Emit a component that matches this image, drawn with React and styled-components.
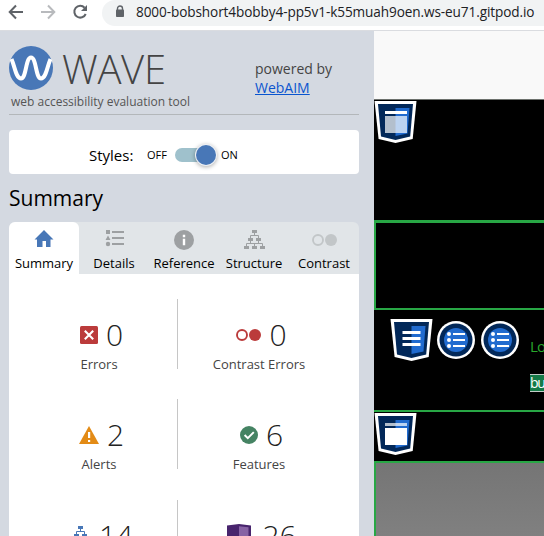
import React from "react";
import styled, { createGlobalStyle } from "styled-components";

const GlobalStyle = createGlobalStyle`
  *, *::before, *::after { box-sizing: border-box; }
  body { margin: 0; background: #fff; overflow: hidden; font-family: "Open Sans", "Noto Sans", sans-serif; }
  svg { display: block; flex: none; }
`;

const Window = styled.div`
  width: 544px;
  height: 536px;
  overflow: hidden;
  display: flex;
  flex-direction: column;
`;

const BrowserBar = styled.header`
  flex: none;
  height: 31px;
  display: flex;
  align-items: flex-start;
  background: #fff;
  border-bottom: 1px solid #dadce0;
`;

const NavButtons = styled.nav`
  width: 102px;
  height: 26px;
  flex: none;
`;

const AddressBar = styled.div`
  flex: 1;
  height: 26px;
  display: flex;
  background: #f1f3f4;
  border-radius: 14px 0 0 14px;
`;

const LockSlot = styled.span`
  width: 34px;
  flex: none;
  padding: 5px 0 0 13px;
`;

const Text = styled.span`
  display: block;
  white-space: nowrap;
  font-size: ${(p) => p.$size}px;
  line-height: ${(p) => p.$line}px;
  font-weight: ${(p) => p.$weight || 400};
  letter-spacing: ${(p) => p.$track || 0}px;
  color: ${(p) => p.$color || "#000"};
`;

const Content = styled.div`
  flex: 1;
  min-height: 0;
  display: flex;
`;

const Sidebar = styled.aside`
  width: 374px;
  flex: none;
  height: 505px;
  overflow: hidden;
  padding: 0 15px 0 9px;
  background: #d4d9e1;
`;

const Brand = styled.div`
  height: 84px;
  display: flex;
  justify-content: space-between;
  border-bottom: 1px solid #b3b7ba;
`;

const BrandMain = styled.div`
  padding-top: 15px;
`;

const LogoRow = styled.div`
  height: 44px;
  display: flex;
  gap: 9px;
`;

const Tagline = styled.div`
  padding: 3px 0 0 2px;
`;

const Credit = styled.div`
  width: 104px;
  padding-top: 28px;
`;

const Link = styled.a`
  display: block;
  font-size: 14px;
  line-height: 19px;
  color: #0a55cf;
  text-decoration: underline;
`;

const StylesCard = styled.section`
  height: 44px;
  margin-top: 15px;
  padding: 5px 0 0 80px;
  display: flex;
  align-items: center;
  background: #fff;
  border-radius: 4px;
`;

const StylesLabel = styled.div`
  width: 58px;
`;

const SwitchLabel = styled.div`
  width: ${(p) => p.$width}px;
`;

const Track = styled.div`
  width: 41px;
  height: 14px;
  margin-right: 5px;
  display: flex;
  align-items: center;
  justify-content: flex-end;
  background: #9fc1cc;
  border-radius: 7px;
`;

const Knob = styled.div`
  width: 20px;
  height: 20px;
  flex: none;
  border-radius: 50%;
  background: #4877b7;
  box-shadow: 0 0 0 1px #eef1f5, 0 1px 4px 1px #0005;
`;

const Heading = styled.h1`
  height: 48px;
  margin: 0;
  padding-top: 9px;
  font-size: 21px;
  line-height: 30px;
  font-weight: 400;
`;

const TabStrip = styled.nav`
  height: 52px;
  display: flex;
  background: #e1e5e8;
  border-radius: 6px 6px 0 0;
`;

const Tab = styled.div`
  width: 70px;
  height: 52px;
  display: flex;
  flex-direction: column;
  align-items: center;
  background: ${(p) => (p.$active ? "#fff" : "transparent")};
  border-radius: 6px 6px 0 0;
`;

const TabIcon = styled.div`
  height: 32px;
  padding-top: 8px;
`;

const Panel = styled.main`
  height: 280px;
  padding: 25px 20px 0 10px;
  background: #fff;
`;

const StatGrid = styled.div`
  display: grid;
  grid-template-columns: 159px 159px;
  grid-template-rows: 70px 71px 70px;
  row-gap: 30px;
`;

const Stat = styled.div`
  height: 70px;
  border-right: ${(p) => (p.$divided ? "1px solid #c6c6c6" : "0")};
  padding: 16px 0 0 ${(p) => (p.$divided ? 2 : 3)}px;
  display: flex;
  flex-direction: column;
  align-items: center;
`;

const StatTop = styled.div`
  height: 40px;
  padding-left: 5px;
  display: flex;
  align-items: center;
  gap: 8px;
`;

const Preview = styled.div`
  flex: 1;
  min-width: 0;
  display: flex;
  flex-direction: column;
  background: #000;
`;

const PageTop = styled.div`
  height: 69px;
  flex: none;
  background: #f9f9f9;
  border-bottom: 1px solid #6d716d;
`;

const HeaderRegion = styled.div`
  height: 120px;
  flex: none;
  padding-top: 1px;
`;

const OutlinedRegion = styled.div`
  height: 90px;
  flex: none;
  border: solid #28a745;
  border-width: 3px 0 2px 2px;
`;

const NavRegion = styled.div`
  height: 100px;
  flex: none;
  display: flex;
  padding: 9px 0 0 16px;
`;

const BadgeRow = styled.div`
  display: flex;
  gap: 4px;
  width: 140px;
  flex: none;
`;

const NavText = styled.div`
  flex: 1;
  padding-top: 17px;
`;

const Highlight = styled.div`
  height: 18px;
  margin-top: 18px;
  background: #157a48;
  border: solid #c3cdc8;
  border-width: 1px 0;
`;

const MainRegion = styled.div`
  height: 51px;
  flex: none;
  border-top: 2px solid #28a745;
  padding-top: 1px;
`;

const HeroRegion = styled.div`
  flex: 1;
  border: solid #28a745;
  border-width: 2px 0 0 2px;
  background: linear-gradient(#757575, #808080);
`;

function NavIcons() {
  return (
    <svg width="102" height="26" fill="none" stroke="#5f6368" strokeWidth="2">
      <path d="M23 12H10M16 5.5L9.7 12l6.3 6.500" />
      <path d="M41 12h13M48 5.5l6.300 6.500-6.300 6.500" stroke="#b8babd" />
      <path d="M84.600 7.700A5.900 5.900 0 1 0 85.700 14" />
      <path d="M87 5v6h-6z" fill="#5f6368" stroke="none" />
    </svg>
  );
}

function Lock() {
  return (
    <svg width="10" height="13">
      <path d="M2.500 6V3.500a2.500 2.500 0 0 1 5 0V6" fill="none" stroke="#5f6368" strokeWidth="1.400" />
      <rect x="1" y="4.500" width="8" height="7.500" rx="0.800" fill="#5f6368" />
    </svg>
  );
}

function WaveLogo() {
  return (
    <svg width="44" height="44" viewBox="0 0 44 44">
      <circle cx="22" cy="22" r="22" fill="#4877b7" />
      <path d="M2.500 13C6 21 7 32.500 12 32.500C17.500 32.500 16.500 11.500 22 11.500S26.500 32.500 32 32.500C37 32.500 38 21 41.500 13" fill="none" stroke="#fff" strokeWidth="4" />
    </svg>
  );
}

function Home() {
  return (
    <svg width="20" height="18">
      <path d="M10 0L19.500 9.500H16.500V17H12V11H8.500V17H3V9.500H.5z" fill="#4877b7" />
    </svg>
  );
}

function Details() {
  return (
    <svg width="19" height="18" fill="#9da0a2">
      <path d="M1 0h4v4H1zM3 5.500l2.500 4.500h-5z" />
      <circle cx="3" cy="14" r="2.200" />
      <path d="M7 1h12v2H7zM7 7h12v2H7zM7 13h12v2H7z" />
    </svg>
  );
}

function Info() {
  return (
    <svg width="20" height="20">
      <circle cx="10" cy="10" r="10" fill="#9da0a2" />
      <path d="M8.800 4.800h2.400v2.400H8.800zM8.800 8.700h2.400v6.500H8.800z" fill="#fff" />
    </svg>
  );
}

function Tree({ color }) {
  return (
    <svg width="21" height="20" fill={color}>
      <path d="M8 0h5v3H8zM4 8h5v3H4zM12 8h5v3h-5zM0 16h5v3H0zM8 16h5v3H8zM16 16h5v3h-5z" />
      <path d="M10.500 3v2.500M6.500 8V5.500h8V8M2.500 16v-2.500h16V16M10.500 13.500V16M6.500 11v2.500M14.500 11v2.500" fill="none" stroke={color} />
    </svg>
  );
}

function Dots({ color, top = 3.5 }) {
  return (
    <svg width="25" height={top * 2 + 13}>
      <circle cx="6" cy={top + 6.5} r="5" fill="none" stroke={color} strokeWidth="1.900" />
      <circle cx="19" cy={top + 6.5} r="6" fill={color} />
    </svg>
  );
}

function ErrorIcon() {
  return (
    <svg width="18" height="18">
      <rect width="18" height="18" rx="1.500" fill="#bb3b3b" />
      <path d="M4.800 4.800l8.400 8.400M13.200 4.800l-8.400 8.400" stroke="#fff" strokeWidth="2.100" />
    </svg>
  );
}

function AlertIcon() {
  return (
    <svg width="20" height="18">
      <path d="M10 0l10 18H0z" fill="#e38b16" />
      <path d="M9 6h2.200v6H9zM9 14h2.200v2H9z" fill="#fff" />
    </svg>
  );
}

function CheckIcon() {
  return (
    <svg width="18" height="18">
      <circle cx="9" cy="9" r="9" fill="#458363" />
      <path d="M4.600 9l3.200 3.100 6-6" fill="none" stroke="#fff" strokeWidth="2" />
    </svg>
  );
}

function AriaIcon() {
  return (
    <svg width="28" height="24">
      <path d="M1 1.500L13 0l12 1.500V20l-12 4-12-4z" fill="#48246d" />
      <path d="M13 2.300l9.500 1V18L13 21z" fill="#8762a4" />
    </svg>
  );
}

function Shield({ kind }) {
  return (
    <svg width="43" height="42" viewBox="0 0 43 42">
      <path d="M.5 0h42l-3.800 38L21.500 42 4.600 38z" fill="#fff" />
      <path d="M4 3h35l-2.800 32.500L21.500 39 7 35.500z" fill="#022859" />
      <path d="M21.500 7h14l-2 25.500L21.500 35z" fill="#216bcf" />
      {kind === "header" && (
        <>
          <path d="M11 10h22v3H11z" fill="#fff" />
          <path d="M11 15h22v17H11z" fill="#fff" opacity="0.700" />
        </>
      )}
      {kind === "main" && (
        <>
          <path d="M11 10h22v3H11z" fill="#fff" opacity="0.700" />
          <path d="M11 15h22v17H11z" fill="#fff" />
        </>
      )}
      {kind === "nav" && <path d="M12.500 12h18v3h-18zM12.500 18h18v3h-18zM12.500 24h18v3h-18z" fill="#fff" />}
    </svg>
  );
}

function ListBadge() {
  return (
    <svg width="40" height="42">
      <circle cx="19" cy="21" r="19" fill="#fff" />
      <circle cx="19" cy="21" r="16.500" fill="#022859" />
      <circle cx="19" cy="21" r="12" fill="#216bcf" />
      <g fill="#fff">
        <circle cx="12" cy="15" r="2" />
        <circle cx="12" cy="21" r="2" />
        <circle cx="12" cy="27" r="2" />
        <path d="M16 14h12v2H16zM16 20h12v2H16zM16 26h12v2H16z" />
      </g>
    </svg>
  );
}

const tabs = [
  { label: "Summary", icon: <Home />, active: true },
  { label: "Details", icon: <Details /> },
  { label: "Reference", icon: <Info /> },
  { label: "Structure", icon: <Tree color="#9da0a2" /> },
  { label: "Contrast", icon: <Dots color="#c2c6c8" /> },
];

const stats = [
  { id: "errors", value: 0, label: "Errors", icon: <ErrorIcon /> },
  { id: "contrast", value: 0, label: "Contrast Errors", icon: <Dots color="#bb3b3b" top={2.5} /> },
  { id: "alerts", value: 2, label: "Alerts", icon: <AlertIcon /> },
  { id: "features", value: 6, label: "Features", icon: <CheckIcon /> },
  { id: "structure", value: 14, icon: <Tree color="#4877b7" /> },
  { id: "aria", value: 26, icon: <AriaIcon /> },
];

export default function App() {
  return (
    <Window>
      <GlobalStyle />
      <BrowserBar>
        <NavButtons><NavIcons /></NavButtons>
        <AddressBar>
          <LockSlot><Lock /></LockSlot>
          <Text $size={13.6} $line={24} $track={-0.1} $color="#202124">8000-bobshort4bobby4-pp5v1-k55muah9oen.ws-eu71.gitpod.io</Text>
        </AddressBar>
      </BrowserBar>
      <Content>
        <Sidebar>
          <Brand>
            <BrandMain>
              <LogoRow>
                <WaveLogo />
                <Text $size={40} $line={46} $weight={300} $track={-0.3} $color="#444">WAVE</Text>
              </LogoRow>
              <Tagline><Text $size={12} $line={18} $color="#555">web accessibility evaluation tool</Text></Tagline>
            </BrandMain>
            <Credit>
              <Text $size={14} $line={19} $color="#444">powered by</Text>
              <Link>WebAIM</Link>
            </Credit>
          </Brand>
          <StylesCard>
            <StylesLabel><Text $size={15} $line={20}>Styles:</Text></StylesLabel>
            <SwitchLabel $width={28}><Text $size={11} $line={16}>OFF</Text></SwitchLabel>
            <Track><Knob /></Track>
            <SwitchLabel $width={20}><Text $size={11} $line={16}>ON</Text></SwitchLabel>
          </StylesCard>
          <Heading>Summary</Heading>
          <TabStrip>
            {tabs.map((t) => (
              <Tab key={t.label} $active={t.active}>
                <TabIcon>{t.icon}</TabIcon>
                <Text $size={13} $line={18}>{t.label}</Text>
              </Tab>
            ))}
          </TabStrip>
          <Panel>
            <StatGrid>
              {stats.map((s, i) => (
                <Stat key={s.id} $divided={i % 2 === 0}>
                  <StatTop>
                    {s.icon}
                    <Text $size={30} $line={40} $weight={300} $color="#222">{s.value}</Text>
                  </StatTop>
                  {s.label && <Text $size={13} $line={18} $color="#444">{s.label}</Text>}
                </Stat>
              ))}
            </StatGrid>
          </Panel>
        </Sidebar>
        <Preview>
          <PageTop />
          <HeaderRegion><Shield kind="header" /></HeaderRegion>
          <OutlinedRegion />
          <NavRegion>
            <BadgeRow><Shield kind="nav" /><ListBadge /><ListBadge /></BadgeRow>
            <NavText>
              <Text $size={15} $line={20} $track={-0.8} $color="#28a72c">Lo</Text>
              <Highlight><Text $size={14} $line={16} $track={-1.2} $color="#fff">bu</Text></Highlight>
            </NavText>
          </NavRegion>
          <MainRegion><Shield kind="main" /></MainRegion>
          <HeroRegion />
        </Preview>
      </Content>
    </Window>
  );
}
